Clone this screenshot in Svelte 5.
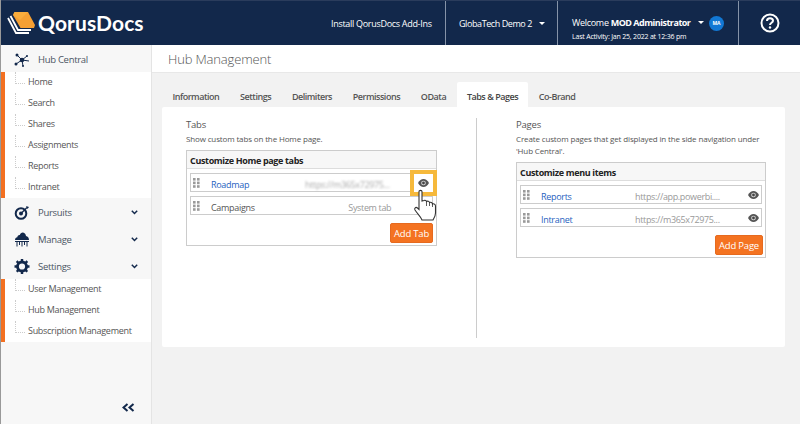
<script>
  const hub = ['Home','Search','Shares','Assignments','Reports','Intranet'];
  const settings = ['User Management','Hub Management','Subscription Management'];
  const tabs = ['Information','Settings','Delimiters','Permissions','OData','Tabs & Pages','Co-Brand'];
</script>

{#snippet grip()}
  <svg class="grip" width="7" height="10" viewBox="0 0 7 10"><g fill="#9a9a9a"><rect width="2.6" height="2.6"/><rect x="4" width="2.6" height="2.6"/><rect y="3.6" width="2.6" height="2.6"/><rect x="4" y="3.6" width="2.6" height="2.6"/><rect y="7.2" width="2.6" height="2.6"/><rect x="4" y="7.2" width="2.6" height="2.6"/></g></svg>
{/snippet}
{#snippet eye()}
  <svg class="eye" width="11" height="8" viewBox="0 0 11 8"><path d="M0 4C1.5 1.4 3.3 0 5.5 0S9.5 1.4 11 4C9.5 6.6 7.700 8 5.500 8S1.500 6.600 0 4Z" fill="#555"/><circle cx="5.500" cy="4" r="2.300" fill="#ddd"/><circle cx="5.500" cy="4" r="1.400" fill="#444"/></svg>
{/snippet}
{#snippet chev()}
  <svg class="chev" width="7" height="5" viewBox="0 0 7 5"><path d="M.8 .8 3.500 3.500 6.200 .8" fill="none" stroke="#12284b" stroke-width="1.500"/></svg>
{/snippet}
{#snippet sub(items)}
  <ul class="sub">
    {#each items as it}<li>{it}</li>{/each}
  </ul>
{/snippet}

<div class="page">
  <header>
    <div class="logo">
      <svg width="29" height="26" viewBox="0 0 29 26">
        <path d="M1 8 9 23H22" fill="none" stroke="#fff" stroke-width="1.800"/>
        <path d="M3.500 6 11 20H24" fill="none" stroke="#fff" stroke-width="1.800"/>
        <path d="M6 5 13.500 18H27L28 15 21 2H7.500Z" fill="#f5a033"/>
        <path d="M6 5 7.500 2H21L13 10Z" fill="#fbb040" opacity=".7"/>
      </svg>
      <span>QorusDocs</span>
    </div>
    <div class="h-cell install">Install QorusDocs Add-Ins</div>
    <div class="h-cell org">GlobaTech Demo 2 <i class="caret"></i></div>
    <div class="h-cell user">
      <div class="who">
        <div class="welcome">Welcome <b>MOD Administrator</b> <i class="caret"></i></div>
        <div class="last">Last Activity: Jan 25, 2022 at 12:36 pm</div>
      </div>
      <span class="avatar">MA</span>
    </div>
    <div class="help">
      <svg width="20" height="20" viewBox="0 0 20 20"><circle cx="10" cy="10" r="8.500" fill="none" stroke="#fff" stroke-width="2"/><path d="M7 8C7 6.200 8.300 5.300 10 5.300S13 6.300 13 7.800C13 9.800 10 9.800 10 12" fill="none" stroke="#fff" stroke-width="2"/><circle cx="10" cy="14.500" r="1.200" fill="#fff"/></svg>
    </div>
  </header>

  <div class="body">
    <aside>
      <div class="nav-head">
        <svg width="16" height="14" viewBox="0 0 16 14"><g stroke="#12284b" stroke-width="1"><path d="M8 7 3 2M8 7 13 3M8 7 2 11M8 7 9 13M8 7 15 8"/></g><g fill="#12284b"><circle cx="8" cy="7" r="2.300"/><circle cx="3" cy="2" r="1.500"/><circle cx="13" cy="3" r="1"/><circle cx="2" cy="11" r="1.500"/><circle cx="9" cy="13" r="1"/></g></svg>
        <span>Hub Central</span>
      </div>
      {@render sub(hub)}
      <div class="nav-head">
        <svg width="16" height="14" viewBox="0 0 16 14"><circle cx="7" cy="7.500" r="5.300" fill="none" stroke="#12284b" stroke-width="2"/><circle cx="7" cy="7.500" r="2" fill="#12284b"/><path d="M7 7.500 13 1.500" stroke="#12284b" stroke-width="1.300"/><path d="M12 0 15 1 13.500 3Z" fill="#12284b"/></svg>
        <span>Pursuits</span>{@render chev()}
      </div>
      <div class="nav-head">
        <svg width="16" height="15" viewBox="0 0 16 15"><path d="M1 8C1 6.300 2 5.400 3.300 5.200 3.500 3.600 4.800 2.800 5.800 3 6.300 1.400 7.500.5 9 .6 10.800.8 11.800 2.500 12 4 13.800 4.300 15 5.800 15 8Z" fill="#12284b"/><path d="M1 9.500H15" stroke="#12284b"/><path d="M3 10V14.500M5.500 10V13M8 10V14.500M10.500 10V13M13 10V14.500" stroke="#12284b" stroke-width="1"/></svg>
        <span>Manage</span>{@render chev()}
      </div>
      <div class="nav-head">
        <svg width="16" height="15" viewBox="0 0 16 16"><circle cx="8" cy="8" r="4.800" fill="none" stroke="#12284b" stroke-width="3"/><path d="M8 0V16M0 8H16M2.300 2.300 13.700 13.700M13.700 2.300 2.300 13.700" stroke="#12284b" stroke-width="2.600" stroke-dasharray="2.800 10.400 2.800"/></svg>
        <span>Settings</span>{@render chev()}
      </div>
      {@render sub(settings)}
      <div class="collapse">
        <svg width="13" height="9" viewBox="0 0 13 9"><path d="M5.500 1 1.500 4.500 5.500 8M11.500 1 7.500 4.500 11.500 8" fill="none" stroke="#12284b" stroke-width="2"/></svg>
      </div>
    </aside>

    <main>
      <h1>Hub Management</h1>
      <div class="content">
        <nav>
          {#each tabs as t}<span class="tab" class:active={t === 'Tabs & Pages'}>{t}</span>{/each}
        </nav>
        <section class="card">
          <div class="col left">
            <h2>Tabs</h2>
            <p class="desc">Show custom tabs on the Home page.</p>
            <div class="box">
              <div class="box-head">Customize Home page tabs</div>
              <div class="rows">
                <div class="row">
                  {@render grip()}<a>Roadmap</a><span class="url blur">https://m365x72975...</span>
                  <span class="hl">{@render eye()}</span>
                  <svg class="hand" width="24" height="33" viewBox="0 0 24 33"><path d="M6 2.500C6 1 9 1 9 2.500V12L11 11.500C12 11 13.500 11.500 13.500 12.500 14.500 11.800 16.300 12.200 16.500 13.500 17.500 13 19.500 13.500 19.500 15 20 14.500 22.500 15 22.500 17V24C22.500 27 21 29 20 31H9C7.500 27 5 25.500 2 21 1 19.300 2.700 17.500 4.500 19L6 20.500Z" fill="#fff" stroke="#333" stroke-width="1.100"/><path d="M13.500 12.500V17M16.500 13.500V17M19.500 15V18" stroke="#333" stroke-width=".8" fill="none"/></svg>
                </div>
                <div class="row">{@render grip()}<span class="name">Campaigns</span><span class="url sys">System tab</span></div>
              </div>
              <div class="foot"><button>Add Tab</button></div>
            </div>
          </div>
          <div class="divider"></div>
          <div class="col right">
            <h2>Pages</h2>
            <p class="desc">Create custom pages that get displayed in the side navigation under 'Hub Central'.</p>
            <div class="box">
              <div class="box-head">Customize menu items</div>
              <div class="rows">
                <div class="row">{@render grip()}<a>Reports</a><span class="url">https://app.powerbi....</span>{@render eye()}</div>
                <div class="row">{@render grip()}<a>Intranet</a><span class="url">https://m365x72975...</span>{@render eye()}</div>
              </div>
              <div class="foot"><button>Add Page</button></div>
            </div>
          </div>
        </section>
      </div>
    </main>
  </div>
</div>

<style>
  :global(body) { margin: 0; }
  .page { width: 800px; height: 424px; overflow: hidden; display: flex; flex-direction: column; font-family: "Open Sans", "Noto Sans", sans-serif; font-size: 9px; letter-spacing: -.3px; color: #444; background: #f2f2f2; box-sizing: border-box; border-left: 1px solid #999; }
  header { height: 45px; flex: none; background: #12284b; color: #fff; display: flex; border-top: 1px solid #2a3c5c; box-sizing: border-box; }
  .logo { width: 300px; flex: none; display: flex; align-items: center; padding-left: 6px; gap: 2px; box-sizing: border-box; font: 700 21px/1 "Lato", sans-serif; letter-spacing: .1px; }
  .logo span { margin-top: -2px; }
  .h-cell { display: flex; align-items: center; border-left: 1px solid #8593a8; box-sizing: border-box; flex: none; }
  .install { border-left: 0; width: 144px; padding-left: 30px; }
  .org { width: 112px; padding-left: 13px; letter-spacing: -.42px; }
  .org .caret { margin-left: 7px; }
  .user { width: 181px; padding: 0 14px 0 14px; justify-content: space-between; }
  .who { padding-top: 10px; }
  .welcome { letter-spacing: -.3px; }
  .welcome b { font-weight: 700; letter-spacing: -.5px; }
  .last { font-size: 7px; letter-spacing: -.2px; margin-top: 3px; }
  .caret { display: inline-block; width: 0; height: 0; margin-left: 5px; border: 3px solid transparent; border-top: 3.500px solid #fff; border-bottom: 0; vertical-align: 2px; }
  .avatar { width: 15px; height: 15px; flex: none; border-radius: 50%; background: #1278d4; font-size: 5px; font-weight: 700; display: flex; align-items: center; justify-content: center; letter-spacing: 0; }
  .help { flex: 1; border-left: 1px solid #8593a8; display: flex; align-items: center; justify-content: center; }
  .body { flex: 1; display: flex; min-height: 0; }
  aside { width: 150px; flex: none; background: #f7f7f7; border-right: 1px solid #e4e4e4; display: flex; flex-direction: column; }
  .nav-head { height: 27px; display: flex; align-items: center; padding: 2px 0 0 13px; box-sizing: border-box; color: #4b5563; font-size: 9.500px; flex: none; letter-spacing: -.3px; }
  .nav-head span { margin-left: 8px; flex: 1; }
  .chev { margin-right: 13px; margin-top: -1px; }
  .sub { list-style: none; margin: 0; padding: 0 0 0 4px; background: #fff; position: relative; }
  .sub::before { content: ""; position: absolute; left: 0; top: 0; bottom: 0; width: 4px; background: #f37021; }
  .sub li { height: 21px; line-height: 19px; padding-left: 23px; color: #555; position: relative; }
  .sub li::before { content: ""; position: absolute; left: 10px; top: 0; height: 50%; width: 9px; border-left: 1px dotted #ccc; border-bottom: 1px dotted #ccc; }
  .collapse { margin-top: auto; height: 29px; text-align: right; padding-right: 16px; line-height: 27px; }
  main { flex: 1; min-width: 0; display: flex; flex-direction: column; }
  h1 { margin: 0; height: 28px; line-height: 29px; flex: none; background: #fff; border-bottom: 1px solid #e8e8e8; box-sizing: border-box; padding-left: 16px; font-size: 13px; font-weight: 300; letter-spacing: -.15px; color: #555; }
  .content { padding: 9px 15px 0 10px; }
  nav { display: flex; height: 25px; }
  .tab { padding: 0 10.400px; line-height: 29px; font-weight: 600; letter-spacing: -.48px; color: #555; border-radius: 2px 2px 0 0; }
  .tab.active { background: #fff; color: #444; }
  .card { height: 240px; box-sizing: border-box; background: #fff; border-radius: 2px; display: flex; padding: 12px 0 0 24px; }
  .col { flex: none; }
  .left { width: 251px; }
  .right { width: 250px; }
  .divider { width: 1px; height: 220px; background: #ccc; margin: -1px 39px 0 39px; flex: none; }
  h2 { margin: 0; font-size: 9.500px; font-weight: 400; color: #555; line-height: 11px; letter-spacing: -.2px; }
  .desc { margin: 3px 0 0; font-size: 8px; line-height: 12px; color: #555; letter-spacing: -.14px; min-height: 12px; }
  .left .box { margin-top: 5px; }
  .right .box { margin-top: 5px; }
  .box { border: 1px solid #ccc; box-sizing: border-box; height: 96px; background: #fff; }
  .box-head { height: 18px; line-height: 19px; background: #f7f7f7; border-bottom: 1px solid #ddd; padding-left: 3px; box-sizing: border-box; font-weight: 700; color: #222; letter-spacing: -.35px; }
  .rows { padding: 4px 3px 0; display: flex; flex-direction: column; gap: 4px; }
  .row { height: 19px; box-sizing: border-box; border: 1px solid #ccc; display: flex; align-items: center; padding-left: 2px; position: relative; }
  .row a { color: #1f5fc0; width: 94px; margin-left: 11px; padding-top: 3px; }
  .row .name { width: 94px; margin-left: 11px; color: #555; padding-top: 3px; }
  .grip { flex: none; }
  .url { color: #999; width: 88px; white-space: nowrap; letter-spacing: -.35px; padding-top: 3px; }
  .url.sys { padding-left: 48px; }
  .row .eye { margin: 1px 2px 0 auto; }
  .blur { filter: blur(1.300px); color: #aaa; }
  .hl { position: absolute; right: -5px; top: -4px; width: 27px; height: 26px; box-sizing: border-box; border: 4px solid #f6b93b; display: flex; align-items: center; justify-content: center; background: #fff; }
  .row .hl .eye { margin: 0; }
  .hand { position: absolute; right: -5px; top: 15px; z-index: 2; }
  .foot { display: flex; justify-content: flex-end; padding: 8px 3px 0 0; }
  .right .foot { padding-right: 2px; }
  button { height: 20px; padding: 0 3px; border: 1px solid #e66a1f; background: #f47321; color: #fff; border-radius: 2px; font: 500 9.500px "Open Sans", sans-serif; letter-spacing: -.2px; }
</style>
